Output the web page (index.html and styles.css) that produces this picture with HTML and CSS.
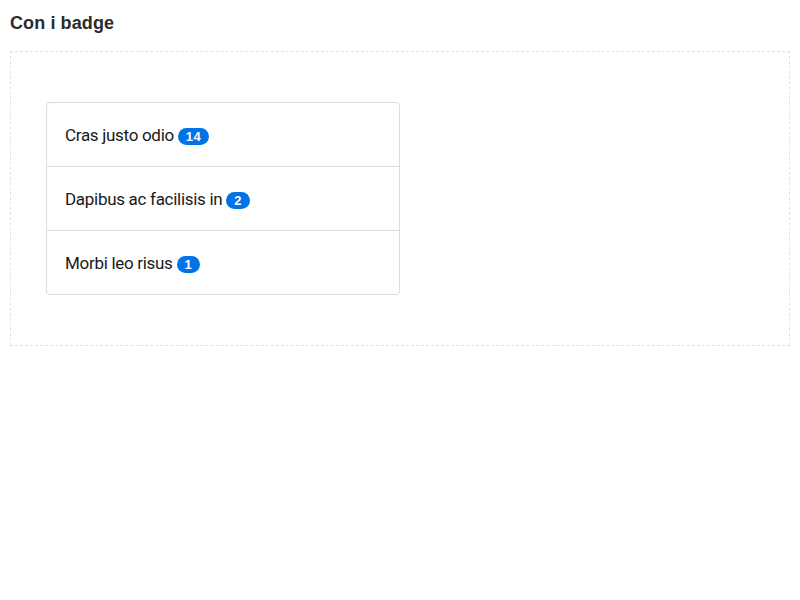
FILE: index.html
```html
<!DOCTYPE html>
<html lang="it">
<head>
<meta charset="utf-8">
<link rel="stylesheet" href="styles.css">
</head>
<body>
<h1 class="title">Con i badge</h1>
<div class="demo">
  <ul class="list">
    <li class="item">Cras justo odio <span class="badge">14</span></li>
    <li class="item">Dapibus ac facilisis in <span class="badge">2</span></li>
    <li class="item">Morbi leo risus <span class="badge">1</span></li>
  </ul>
</div>
</body>
</html>
```
FILE: styles.css
```css
html, body { margin: 0; padding: 0; background: #fff; }
body { padding: 10px; }
.title {
  font-family: "Liberation Sans", Arial, sans-serif;
  font-size: 18px;
  font-weight: bold;
  color: #2b2b2b;
  margin: 3px 0 18px 0;
  line-height: 20px;
  letter-spacing: 0.1px;
}
.demo {
  border: 1px dashed #e3e3e3;
  padding: 50px 35px 50px 35px;
}
.list {
  list-style: none;
  margin: 0;
  padding: 0;
  width: 352px;
  border: 1px solid #dcdcdc;
  border-radius: 4px;
}
.item {
  font-family: Roboto, "Open Sans", sans-serif;
  font-size: 17px;
  line-height: 24px;
  color: #19191a;
  padding: 20px 18px 19px 18px;
  border-bottom: 1px solid #dcdcdc;
  letter-spacing: -0.3px;
}
.item:last-child { border-bottom: 0; }
.badge {
  display: inline-block;
  background: #0073e6;
  color: #fff;
  font-family: "Liberation Sans", Arial, sans-serif;
  font-weight: bold;
  font-size: 13px;
  line-height: 17px;
  padding: 0 8px;
  border-radius: 9px;
  vertical-align: 0;
  letter-spacing: 0.5px;
}
```
